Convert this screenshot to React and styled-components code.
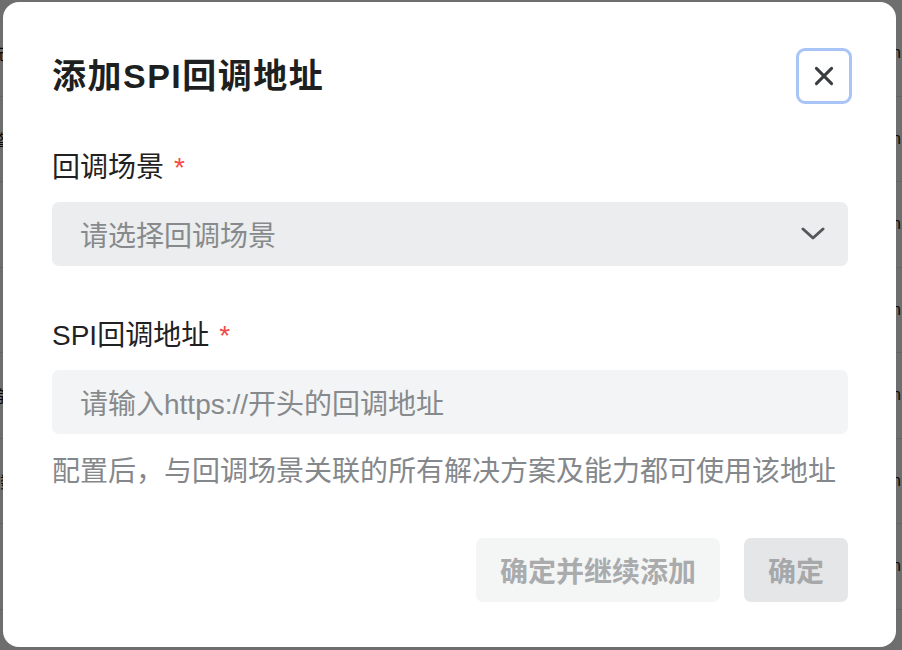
import styled, { createGlobalStyle } from "styled-components";

const GlobalStyle = createGlobalStyle`
    html, body {
        margin: 0;
        padding: 0;
        background: #ffffff;
        overflow: hidden;
    }
    body {
        font-family: "Liberation Sans", "Noto Sans CJK SC", sans-serif;
    }
`;

// 背景のページ（モーダルの後ろでほぼ隠れる）
const Page = styled.div`
    width: 902px;
    height: 650px;
    padding-top: 11px;
    box-sizing: border-box;
    overflow: hidden;
`;
const TableRow = styled.div`
    height: 85.5px;
    display: flex;
    align-items: center;
    justify-content: space-between;
    border-bottom: 1px solid #e6e6e6;
    box-sizing: border-box;
    font-size: 16px;
    color: #111;
`;
const LeftCell = styled.span`
    margin-left: -9px;
`;
const RightCell = styled.span`
    margin-right: 1px;
`;

const Overlay = styled.div`
    position: fixed;
    inset: 0;
    background: rgba(0, 0, 0, 0.57);
    padding: 2px 6px 3px 3px;
    box-sizing: border-box;
    display: flex;
    align-items: flex-start;
`;

const Dialog = styled.div`
    width: 893px;
    box-sizing: border-box;
    padding: 46px 48px 45px 49px;
    background: #ffffff;
    border-radius: 16px;
    display: flex;
    flex-direction: column;
    font-family: "Liberation Sans", "Noto Sans CJK SC", sans-serif;
`;

const Header = styled.div`
    display: flex;
    align-items: center;
    justify-content: space-between;
    height: 56px;
    margin-right: -4px;
`;
const Title = styled.h2`
    margin: 0;
    font-size: 34px;
    letter-spacing: 1.5px;
    font-weight: 700;
    color: #1d1f21;
    line-height: 40px;
`;
const CloseButton = styled.button`
    width: 56px;
    height: 56px;
    box-sizing: border-box;
    border: 3px solid #a9c5f7;
    border-radius: 9px;
    background: #ffffff;
    display: flex;
    align-items: center;
    justify-content: center;
    padding: 0;
    color: #3a3d40;
`;

const Field = styled.div`
    display: flex;
    flex-direction: column;
    margin-top: ${(p) => p.$top}px;
`;
const Label = styled.label`
    font-size: 28px;
    line-height: 32px;
    color: #1f2123;
    margin-bottom: ${(p) => p.$gap}px;
    & em {
        font-style: normal;
        color: #f54a45;
        margin-left: 10px;
    }
`;
const Control = styled.div`
    height: 64px;
    box-sizing: border-box;
    padding: 0 23px 0 28px;
    border-radius: 7px;
    background: ${(p) => (p.$select ? "#ecedee" : "#f3f4f5")};
    display: flex;
    align-items: center;
    justify-content: space-between;
    font-size: 28px;
    color: #878a8c;
`;
const Help = styled.p`
    margin: 22px 0 0;
    font-size: 28px;
    line-height: 32px;
    color: #85888b;
`;

const Footer = styled.div`
    margin-top: 50px;
    display: flex;
    justify-content: flex-end;
    gap: 24px;
`;
const Button = styled.button`
    height: 64px;
    padding: 0 24px;
    border: none;
    border-radius: 7px;
    font-family: inherit;
    font-size: 28px;
    font-weight: 700;
    background: ${(p) => (p.$primary ? "#e5e6e8" : "#f4f5f5")};
    color: ${(p) => (p.$primary ? "#a6a8aa" : "#a9abad")};
`;

const rows = ["元", "整", "", "", "等", "1", ""];

function App() {
    return (
        <>
            <GlobalStyle />
            <Page>
                {rows.map((t, i) => (
                    <TableRow key={i}>
                        <LeftCell>{t ? t + "数据" : "\u00a0"}</LeftCell>
                        <RightCell>Admin</RightCell>
                    </TableRow>
                ))}
            </Page>
            <Overlay>
                <Dialog>
                    <Header>
                        <Title>添加SPI回调地址</Title>
                        <CloseButton aria-label="关闭">
                            <svg width="26" height="26" viewBox="0 0 24 24" fill="none">
                                <path
                                    d="M5 5L19 19M19 5L5 19"
                                    stroke="currentColor"
                                    strokeWidth="2.8"
                                    strokeLinecap="round"
                                />
                            </svg>
                        </CloseButton>
                    </Header>

                    <Field $top={48}>
                        <Label $gap={18}>
                            回调场景<em>*</em>
                        </Label>
                        <Control $select>
                            <span>请选择回调场景</span>
                            <svg width="24" height="14" viewBox="0 0 24 14" fill="none">
                                <path
                                    d="M2 2L12 11L22 2"
                                    stroke="#55585b"
                                    strokeWidth="3"
                                    strokeLinecap="round"
                                    strokeLinejoin="round"
                                />
                            </svg>
                        </Control>
                    </Field>

                    <Field $top={54}>
                        <Label $gap={18}>
                            SPI回调地址<em>*</em>
                        </Label>
                        <Control>
                            <span>请输入https://开头的回调地址</span>
                        </Control>
                    </Field>
                    <Help>配置后，与回调场景关联的所有解决方案及能力都可使用该地址</Help>

                    <Footer>
                        <Button>确定并继续添加</Button>
                        <Button $primary>确定</Button>
                    </Footer>
                </Dialog>
            </Overlay>
        </>
    );
}

export default App;
